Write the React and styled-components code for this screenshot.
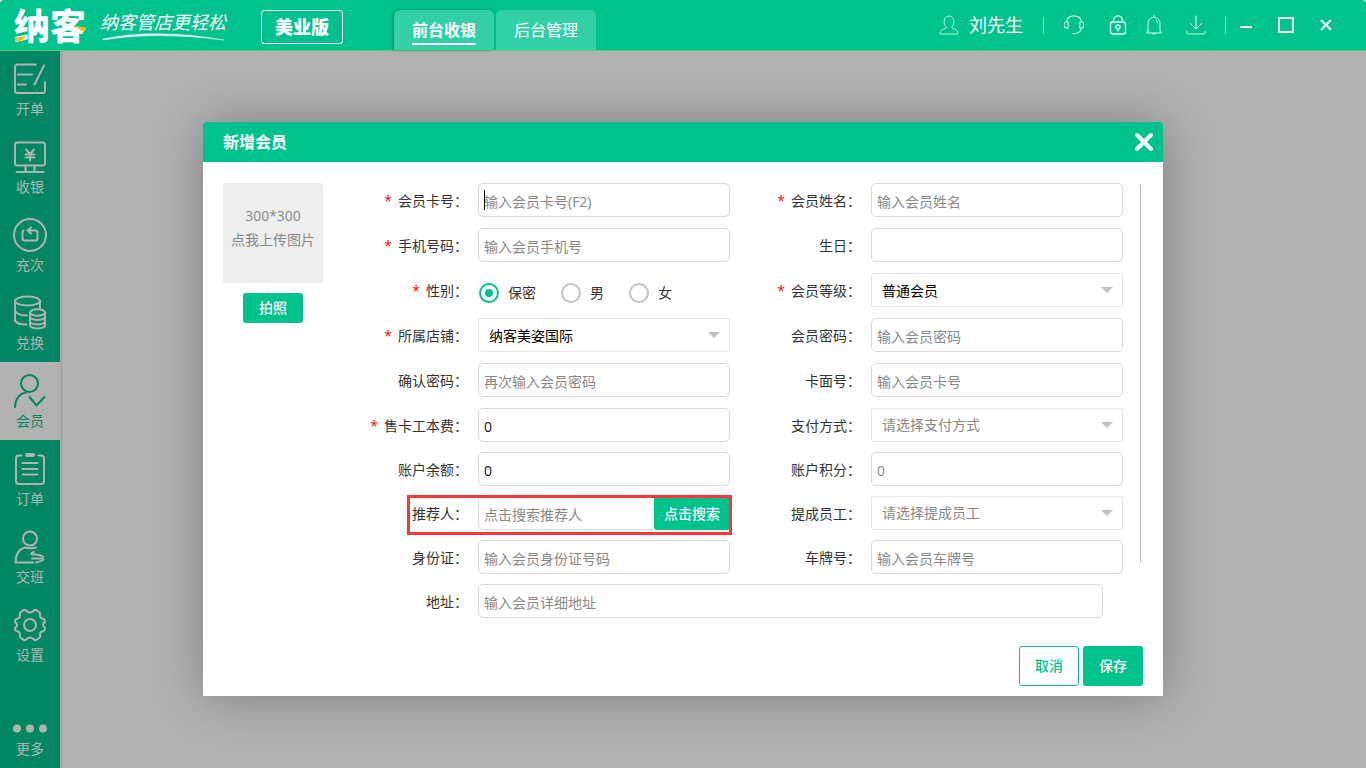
import React from "react";
import styled, { createGlobalStyle, css } from "styled-components";

const green = "#00c28d";

const GlobalStyle = createGlobalStyle`
  *, *::before, *::after { box-sizing: border-box; }
  html, body, #root { height: 100%; }
  body {
    margin: 0;
    background: #fff;
    color: #333;
    font: 14px/20px "Open Sans", "Noto Sans CJK SC", sans-serif;
  }
  button, input, select { font: inherit; color: inherit; margin: 0; }
  button { cursor: pointer; padding: 0; border: 0; background: none; }
  fieldset { margin: 0; padding: 0; border: 0; min-width: 0; }
`;

const Page = styled.div`
  display: flex;
  flex-direction: column;
  min-height: 100%;
`;

/* ---------- top bar ---------- */

const TopBar = styled.header`
  position: relative;
  z-index: 2;
  display: flex;
  align-items: center;
  height: 50px;
  padding: 0 20px 0 14px;
  border-radius: 4px 4px 0 0;
  background: ${green};
  box-shadow: 0 1px 0 #4cd472;
  color: #fff;
`;

const Logo = styled.div`
  position: relative;
  width: 74px;
  height: 50px;
  font-size: 36px;
  line-height: 54px;
  font-weight: 900;
  white-space: nowrap;
`;

const LogoAccent = styled.svg`
  position: absolute;
  left: 0;
  top: 0;
`;

const Slogan = styled.div`
  display: flex;
  flex-direction: column;
  width: 128px;
  margin-left: 12px;
  font-family: "Noto Sans CJK SC", sans-serif;
  font-size: 18px;
  line-height: 24px;
  font-style: italic;
  white-space: nowrap;
`;

const Edition = styled.button`
  width: 82px;
  height: 34px;
  margin: 4px 0 0 33px;
  border: 1px solid #fff;
  border-radius: 3px;
  font-size: 18px;
  font-weight: 900;
`;

const Tabs = styled.nav`
  display: flex;
  align-self: flex-end;
  gap: 2px;
  margin-left: 51px;
`;

const Tab = styled.a`
  display: flex;
  justify-content: center;
  width: 100px;
  height: 40px;
  padding-top: 8px;
  border-radius: 6px 6px 0 0;
  background: #33d0a6;
  color: #fff;
  font-size: 16px;
  line-height: 24px;
  text-decoration: none;
  ${(p) => p.$active && css`
    font-weight: 700;
    box-shadow: -1px 0 3px rgba(0, 80, 50, 0.5);
    span { height: 27px; border-bottom: 2px solid #fff; }
  `}
`;

const Tools = styled.div`
  display: flex;
  align-items: center;
  height: 50px;
  margin-left: auto;
`;

const ToolButton = styled.button`
  display: flex;
  align-items: center;
  gap: 10px;
  margin-right: ${(p) => p.$after}px;
  font-size: 18px;
  line-height: 24px;
`;

const WindowButton = styled.button`
  display: flex;
  align-items: center;
  justify-content: center;
  width: 40px;
  height: 40px;
`;

const Divider = styled.span`
  width: 1px;
  height: 17px;
  margin-right: ${(p) => p.$after}px;
  background: #80e0c6;
`;

/* ---------- side bar ---------- */

const Main = styled.div`
  position: relative;
  display: flex;
  flex: 1;
`;

const SideBar = styled.nav`
  display: flex;
  flex-direction: column;
  width: 63px;
  border-right: 3px solid #f0f0f0;
  background: ${green};
`;

const SideItem = styled.a`
  display: flex;
  flex-direction: column;
  align-items: center;
  gap: 4px;
  height: 78px;
  padding-top: 13px;
  background: ${(p) => (p.$active ? "#fff" : "transparent")};
  color: ${(p) => (p.$active ? green : "#fff")};
  text-decoration: none;
  ${(p) => p.$last && "margin-top: auto;"}
  svg { overflow: visible; }
`;

/* ---------- dialog ---------- */

const Overlay = styled.div`
  position: absolute;
  inset: 0;
  display: flex;
  align-items: center;
  justify-content: center;
  background: rgba(0, 0, 0, 0.3);
`;

const Dialog = styled.section`
  width: min(960px, calc(100% - 40px));
  border-radius: 3px 3px 0 0;
  background: #fff;
  box-shadow: 1px 1px 50px rgba(0, 0, 0, 0.3);
`;

const DialogHead = styled.header`
  display: flex;
  align-items: center;
  justify-content: space-between;
  height: 40px;
  padding: 0 9px 0 20px;
  border-radius: 3px 3px 0 0;
  background: ${green};
  color: #fff;
  h2 { margin: 0; font-size: 16px; line-height: 24px; font-weight: 700; }
  button { display: flex; }
`;

const DialogBody = styled.form`
  display: flex;
  padding: 21px 22px 0 20px;
`;

const PhotoColumn = styled.div`
  display: flex;
  flex-direction: column;
  align-items: center;
  gap: 10px;
  width: 100px;
`;

const UploadBox = styled.button`
  width: 100px;
  height: 100px;
  padding-bottom: 10px;
  border-radius: 3px 3px 0 0;
  background: #eee;
  color: #888;
  line-height: 24px;
  white-space: nowrap;
`;

const SolidButton = styled.button`
  width: 60px;
  height: ${(p) => (p.$tall ? 40 : 30)}px;
  border-radius: 3px;
  background: ${green};
  color: #fff;
  font-weight: 500;
`;

const OutlineButton = styled(SolidButton)`
  border: 1px solid ${green};
  background: #fff;
  color: ${green};
`;

const Fields = styled.div`
  display: flex;
  flex: 1;
  flex-direction: column;
  gap: 11px;
  min-width: 0;
  margin-left: 14px;
`;

const Group = styled.fieldset`
  display: grid;
  grid-template-columns: repeat(2, minmax(0, 1fr));
  row-gap: ${(p) => p.$gap}px;
`;

const Row = styled.div`
  position: relative;
  display: flex;
  align-items: center;
  gap: 10px;
  height: 34px;
  ${(p) => p.$wide && "grid-column: span 2; padding-right: 20px;"}
  ${(p) => p.$marked && css`
    &::after {
      content: "";
      position: absolute;
      inset: -1px -2px -5px 70px;
      border: 3px solid #fa3636;
      pointer-events: none;
    }
  `}
`;

const Label = styled.label`
  flex: none;
  width: 131px;
  padding-top: 2px;
  text-align: right;
  white-space: nowrap;
  i { margin-right: 6px; color: #f00; font-style: normal; }
`;

const Control = styled.div`
  position: relative;
  display: flex;
  flex: 1;
  min-width: 0;
  height: 34px;
`;

const Input = styled.input`
  flex: 1;
  min-width: 0;
  height: 34px;
  padding: 2px 5px 0;
  border: 1px solid #d9d9d9;
  border-radius: 5px;
  outline: 0;
  background: #fff;
  color: #111;
  &::placeholder { color: #888; opacity: 1; }
`;

const Caret = styled.span`
  position: absolute;
  left: 6px;
  top: 7px;
  width: 1px;
  height: 20px;
  background: #000;
`;

const SelectBox = styled(Control)`
  &::after {
    content: "";
    position: absolute;
    right: 10px;
    top: 14px;
    border: 6px solid transparent;
    border-top-color: #c2c2c2;
    border-bottom: 0;
    pointer-events: none;
  }
`;

const Select = styled.select`
  flex: 1;
  min-width: 0;
  appearance: none;
  padding: ${(p) => (p.$empty ? 0 : 2)}px 24px 0 10px;
  border: 1px solid #e6e6e6;
  border-radius: 2px;
  background: #fff;
  color: ${(p) => (p.$empty ? "#888" : "#000")};
`;

const SearchButton = styled.button`
  width: 76px;
  padding-top: 2px;
  border-radius: 3px;
  background: ${green};
  color: #fff;
  font-weight: 500;
`;

const SearchInput = styled(Input)`
  border-right: 0;
  border-radius: 5px 0 0 5px;
`;

const Radios = styled(Control)`
  align-items: center;
  gap: 25px;
  padding: 6px 0 0 1px;
`;

const RadioLabel = styled.label`
  display: flex;
  align-items: center;
  gap: 9px;
  input {
    appearance: none;
    display: grid;
    place-items: center;
    width: 20px;
    height: 20px;
    border: 2px solid #c2c2c2;
    border-radius: 50%;
  }
  input:checked { border-color: ${green}; }
  input:checked::after {
    content: "";
    width: 8px;
    height: 8px;
    border-radius: 50%;
    background: ${green};
  }
`;

const ScrollThumb = styled.div`
  width: 1px;
  height: 377px;
  margin: 2px 0 0 17px;
  background: #b5b5b5;
`;

const DialogFoot = styled.footer`
  display: flex;
  justify-content: flex-end;
  gap: 4px;
  padding: 28px 20px 10px;
`;

/* ---------- icons ---------- */

const Line = ({ size = 20, w = 1, children, ...rest }) => (
  <svg width={size} height={size} viewBox={`0 0 ${size} ${size}`} fill="none"
    stroke="currentColor" strokeWidth={w} strokeLinecap="round" strokeLinejoin="round"
    aria-hidden="true" {...rest}>{children}</svg>
);

const sideItems = [
  ["开单", <path d="M22 1.500H3.500Q1 1.500 1 4V27.500Q1 30 3.500 30H28.500Q31 30 31 27.500V19M4 11.500H18M4 21.500H12M30 2.500L20.500 21.500" />],
  ["收银", <><rect x="1" y="1.500" width="30" height="23" rx="2.500" /><path d="M11.500 24.500V31M20.500 24.500V31M2.500 31H29.500M12 8.500L16 13L20 8.500M16 13V19.500M11.500 13.500H20.500M11.500 16.500H20.500" /></>],
  ["充次", <><circle cx="16" cy="16" r="16" /><path d="M9.500 11.500Q8.500 12 8.500 13.500V19.500Q8.500 21.500 10.500 21.500H21.500Q23.500 21.500 23.500 19.500V13.500Q23.500 11.500 21.500 11.500H14M17 8.500L13.500 11.500L17 14.500" /></>],
  ["兑换", <><ellipse cx="13.500" cy="4" rx="12.500" ry="4.500" /><path d="M1 4V23.500Q3 27.500 12.500 27.500M1 13.500Q3 18.500 13 18.500M26 4V11" /><ellipse cx="23.500" cy="15.500" rx="7.500" ry="3.200" /><path d="M16 15.500V28C16 32.500 31 32.500 31 28V15.500M16 19.500C16 24 31 24 31 19.500M16 24C16 28.500 31 28.500 31 24" /></>],
  ["会员", <><circle cx="15.500" cy="8.500" r="8.500" /><path d="M1 32C1 25 5 18.500 12 17.500M15.500 22L22.500 30.500L30.500 22" /></>, true],
  ["订单", <><path d="M7.500 2.500H5Q2 2.500 2 5.500V28Q2 31 5 31H27Q30 31 30 28V5.500Q30 2.500 27 2.500H24.500M8.500 10H23.500M8.500 16H23.500M8.500 21.500H23.500" /><path d="M13 2H19" strokeWidth="4" /></>],
  ["交班", <><circle cx="16" cy="7.500" r="7" /><path d="M10.500 16.500C4.500 18.500 1.500 24 1.500 31.500H19M10.500 16.500Q17 18 22 16.500M20 21Q15.500 22.500 18.500 23.500Q25 23 29 25.500M18 27.500H29Q31 29.500 22 31.500" /></>],
  ["设置", <><path d="M10 1Q11 .5 12 1.500Q14 3.500 16 3.500T20 1.500Q21 .5 22 1Q25 2.500 26 4Q26.500 5 26 6.500Q26 9.500 29.500 10Q31 10.500 31 13Q29 14 29 16T31 19Q31 21.500 29.500 22Q26 22.500 26 25.500Q26.500 27 26 28Q25 29.500 22 31Q21 31.500 20 30.500Q18 28.500 16 28.500T12 30.500Q11 31.500 10 31Q7 29.500 6 28Q5.500 27 6 25.500Q6 22.500 2.500 22Q1 21.500 1 19Q3 18 3 16T1 13Q1 10.500 2.500 10Q6 9.500 6 6.500Q5.500 5 6 4Q7 2.500 10 1Z" /><circle cx="16" cy="16" r="6" /></>],
];

/* ---------- form parts ---------- */

const Field = ({ id, label, required, marked, wide, children }) => (
  <Row $marked={marked} $wide={wide}>
    <Label htmlFor={id}>{required && <i>*</i>}{label}：</Label>
    {children}
  </Row>
);

const TextField = ({ id, placeholder, value, caret, ...rest }) => (
  <Field id={id} {...rest}>
    <Control>
      <Input id={id} placeholder={placeholder} defaultValue={value} />
      {caret && <Caret />}
    </Control>
  </Field>
);

const SelectField = ({ id, option, empty, ...rest }) => (
  <Field id={id} {...rest}>
    <SelectBox>
      <Select id={id} $empty={empty}><option>{option}</option></Select>
    </SelectBox>
  </Field>
);

export default function App() {
  return (
    <Page>
      <GlobalStyle />
      <TopBar>
        <Logo>
          纳客
          <LogoAccent width="74" height="50" viewBox="0 0 74 50" aria-hidden="true">
            <path d="M1 37.500Q7 38 12 35.500L10 39Q6 41.500 1 41.500Z" fill="#fcb913" />
            <path d="M62 25.500Q67 27.500 72 27.500L71 31.500Q66 31.500 62 25.500Z" fill="#fcb913" />
          </LogoAccent>
        </Logo>
        <Slogan>
          纳客管店更轻松
          <svg width="126" height="8" viewBox="0 0 126 8" aria-hidden="true">
            <path d="M3 6Q55 -5 124 7Q55 -2 3 7Z" fill="#fff" stroke="#fff" strokeWidth=".4" />
          </svg>
        </Slogan>
        <Edition type="button">美业版</Edition>
        <Tabs>
          <Tab href="#cashier" $active><span>前台收银</span></Tab>
          <Tab href="#admin"><span>后台管理</span></Tab>
        </Tabs>
        <Tools>
          <ToolButton type="button" $after={20}>
            <Line>
              <path d="M7.500 12.500C3.500 9 4.500 1 10 1S16.500 9 12.500 12.500C13 14 19 13.500 19 19H1C1 13.500 7 14 7.500 12.500Z" stroke="#b8f5d8" />
            </Line>
            刘先生
          </ToolButton>
          <Divider $after={20} />
          <ToolButton type="button" aria-label="客服" $after={24}>
            <Line size={22} stroke="#c9f7e2" strokeWidth="1.200" width="20" height="22">
              <path d="M2.500 7.500C3.500 3.500 7 1 11 1S18.500 3.500 19.500 7.500M4.500 7.500V14.500H3Q0 14 0 11T3 7.500ZM17.500 7.500V14.500H19Q22 14 22 11T19 7.500ZM19.500 14.500Q17.500 20.500 11.500 20.500H10" />
            </Line>
          </ToolButton>
          <ToolButton type="button" aria-label="锁屏" $after={16}>
            <Line strokeWidth="1.300" stroke="#e4fff2">
              <rect x="2.500" y="7" width="15" height="12" rx="2" />
              <path d="M5.500 7V5.500C5.500 -.7 14.500 -.7 14.500 5.500M10 14V16" />
              <circle cx="10" cy="12" r="2" />
            </Line>
          </ToolButton>
          <ToolButton type="button" aria-label="消息" $after={22}>
            <Line stroke="#d4fae8">
              <path d="M4 16V9C4 0 16 0 16 9V16L17.500 18H2.500L4 16ZM10 .5V2.500M8 18Q10 21 12 18M12 5Q13.500 6 13.500 8" />
            </Line>
          </ToolButton>
          <ToolButton type="button" aria-label="下载" $after={19}>
            <Line stroke="#e4fff2">
              <path d="M10 1V14M4.500 8.500L10 14L15.500 8.500" />
              <path d="M.5 16Q.5 19 3 19H17Q19.500 19 19.500 16" stroke="#80e8bf" strokeWidth="1.500" />
            </Line>
          </ToolButton>
          <Divider $after={0} />
          <WindowButton type="button" aria-label="最小化">
            <Line size={12} w={2} strokeLinecap="butt"><path d="M0 8H12" /></Line>
          </WindowButton>
          <WindowButton type="button" aria-label="最大化">
            <Line size={16} w={2} strokeLinejoin="miter" stroke="#e8ffe0"><rect x="1" y="1" width="14" height="14" /></Line>
          </WindowButton>
          <WindowButton type="button" aria-label="关闭">
            <Line size={12} w={2} strokeLinecap="butt"><path d="M1 1L11 11M11 1L1 11" /></Line>
          </WindowButton>
        </Tools>
      </TopBar>

      <Main>
        <SideBar>
          {sideItems.map(([name, icon, active]) => (
            <SideItem key={name} href="#" $active={active}>
              <Line size={32} w={2}>{icon}</Line>
              {name}
            </SideItem>
          ))}
          <SideItem href="#" $last>
            <svg width="32" height="32" viewBox="0 0 32 32" fill="currentColor" aria-hidden="true">
              <circle cx="3" cy="25.500" r="4" /><circle cx="16" cy="25.500" r="4" /><circle cx="29" cy="25.500" r="4" />
            </svg>
            更多
          </SideItem>
        </SideBar>

        <Overlay>
          <Dialog role="dialog" aria-labelledby="dialog-title">
            <DialogHead>
              <h2 id="dialog-title">新增会员</h2>
              <button type="button" aria-label="关闭">
                <Line w={4}><path d="M3 3L17 17M17 3L3 17" /></Line>
              </button>
            </DialogHead>
            <DialogBody id="member-form">
              <PhotoColumn>
                <UploadBox type="button">300*300<br />点我上传图片</UploadBox>
                <SolidButton type="button">拍照</SolidButton>
              </PhotoColumn>
              <Fields>
                <Group $gap={11}>
                  <TextField id="card" label="会员卡号" required placeholder="输入会员卡号(F2)" caret />
                  <TextField id="name" label="会员姓名" required placeholder="输入会员姓名" />
                  <TextField id="phone" label="手机号码" required placeholder="输入会员手机号" />
                  <TextField id="birthday" label="生日" />
                  <Field id="sex-secret" label="性别" required>
                    <Radios>
                      <RadioLabel><input type="radio" name="sex" id="sex-secret" defaultChecked />保密</RadioLabel>
                      <RadioLabel><input type="radio" name="sex" />男</RadioLabel>
                      <RadioLabel><input type="radio" name="sex" />女</RadioLabel>
                    </Radios>
                  </Field>
                  <SelectField id="level" label="会员等级" required option="普通会员" />
                  <SelectField id="shop" label="所属店铺" required option="纳客美姿国际" />
                  <TextField id="password" label="会员密码" placeholder="输入会员密码" />
                  <TextField id="confirm" label="确认密码" placeholder="再次输入会员密码" />
                  <TextField id="face" label="卡面号" placeholder="输入会员卡号" />
                </Group>
                <Group $gap={10}>
                  <TextField id="fee" label="售卡工本费" required value="0" />
                  <SelectField id="pay" label="支付方式" option="请选择支付方式" empty />
                  <TextField id="balance" label="账户余额" value="0" />
                  <TextField id="points" label="账户积分" placeholder="0" />
                  <Field id="referrer" label="推荐人" marked>
                    <Control>
                      <SearchInput id="referrer" placeholder="点击搜索推荐人" />
                      <SearchButton type="button">点击搜索</SearchButton>
                    </Control>
                  </Field>
                  <SelectField id="staff" label="提成员工" option="请选择提成员工" empty />
                  <TextField id="idcard" label="身份证" placeholder="输入会员身份证号码" />
                  <TextField id="plate" label="车牌号" placeholder="输入会员车牌号" />
                  <TextField id="address" label="地址" placeholder="输入会员详细地址" wide />
                </Group>
              </Fields>
              <ScrollThumb />
            </DialogBody>
            <DialogFoot>
              <OutlineButton type="button" $tall>取消</OutlineButton>
              <SolidButton type="submit" form="member-form" $tall>保存</SolidButton>
            </DialogFoot>
          </Dialog>
        </Overlay>
      </Main>
    </Page>
  );
}
